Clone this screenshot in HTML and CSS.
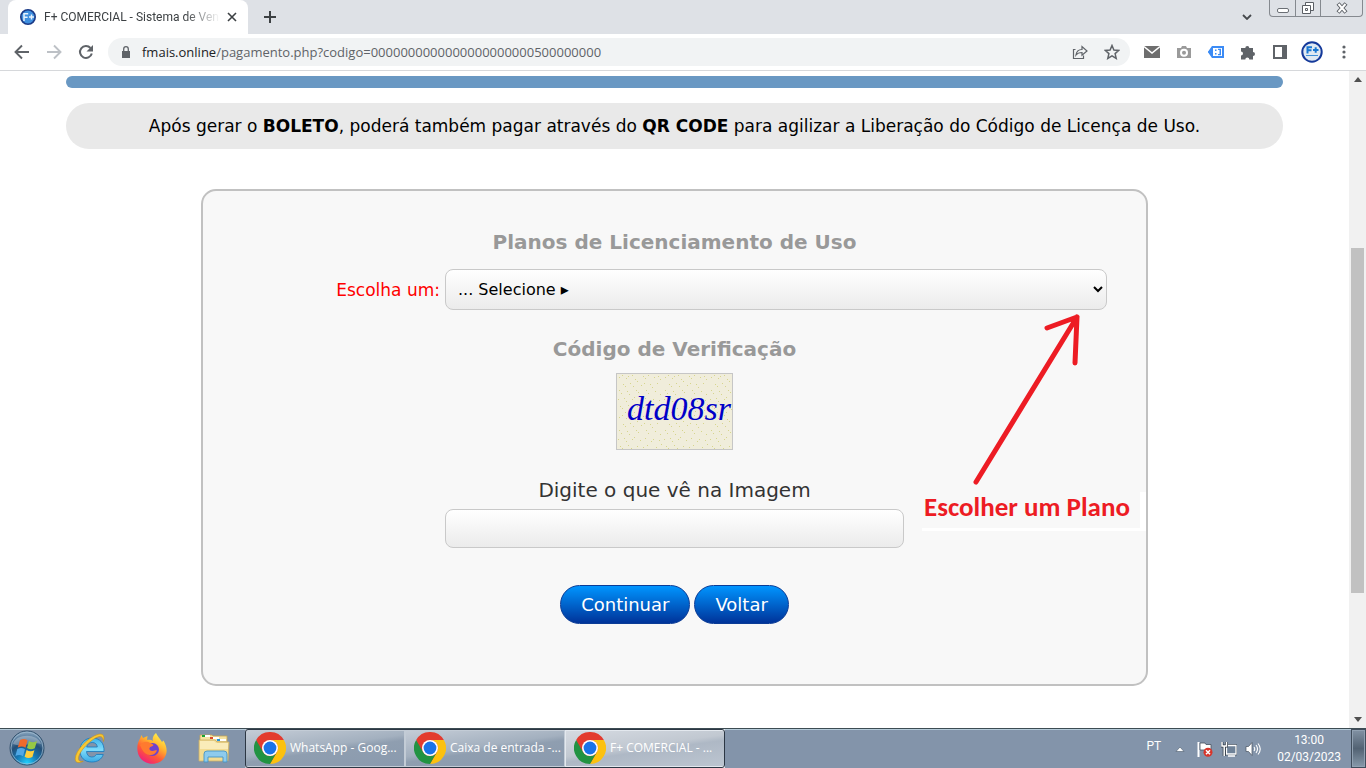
FILE: index.html
```
<!DOCTYPE html>
<html lang="pt">
<head>
    <meta charset="UTF-8">
    <meta name="viewport" content="width=device-width, initial-scale=1.0">
    <title>F+ COMERCIAL - Sistema de Vendas</title>
    <link rel="stylesheet" href="styles.css">
</head>
<body>
    <!-- Icons used more than once -->
    <svg class="defs" aria-hidden="true">
        <symbol id="chrome" viewBox="-16 -16 32 32">
            <circle r="15" fill="#e33b2e"/>
            <path d="M0-8H13.86A16 16 0 0 0-13.86-8L-6.93 4A8 8 0 0 1 0-8Z" fill="#e33b2e"/>
            <path d="M0-8H13.86A16 16 0 0 1 0 16L6.93 4A8 8 0 0 0 0-8Z" fill="#fcc10f"/>
            <path d="M6.93 4L0 16A16 16 0 0 1-13.86-8L-6.93 4A8 8 0 0 0 6.93 4Z" fill="#229342"/>
            <circle r="8" fill="#fff"/>
            <circle r="6.4" fill="#1a73e8"/>
        </symbol>
    </svg>

    <header class="tabs">
        <div class="tab">
            <svg class="favicon" viewBox="0 0 16 16">
                <circle cx="8" cy="8" r="7.2" fill="#3f8fdf" stroke="#1b3a86" stroke-width="1.6"/>
                <path d="M4 12V4.800h4.200M4 8.200h3.600M9 8h5M11.500 5.500v5" fill="none" stroke="#e8f3fd" stroke-width="1.5"/>
            </svg>
            <span class="tab-title">F+ COMERCIAL - Sistema de Ven</span>
            <button class="tab-close" aria-label="Fechar guia">
                <svg viewBox="0 0 10 10"><path d="M1 1l8 8M9 1l-8 8" stroke="#3c4043" stroke-width="1.6"/></svg>
            </button>
        </div>
        <button class="new-tab" aria-label="Nova guia">
            <svg viewBox="0 0 12 12"><path d="M6 0v12M0 6h12" stroke="#3c4043" stroke-width="2"/></svg>
        </button>
        <button class="tab-search" aria-label="Pesquisar guias">
            <svg viewBox="0 0 10 6"><path d="M1 1l4 4 4-4" fill="none" stroke="#45484c" stroke-width="1.8"/></svg>
        </button>
        <div class="window-buttons">
            <button class="min" aria-label="Minimizar">
                <svg viewBox="0 0 24 16"><rect x="6.500" y="8.500" width="11" height="4" rx="1.500" fill="#fff" stroke="#6b6f75"/></svg>
            </button>
            <button class="max" aria-label="Restaurar">
                <svg viewBox="0 0 24 16">
                    <path d="M9.500 2.500h8v8h-8z" fill="#fff" stroke="#5b5f65"/>
                    <path d="M6.500 5.500h8v8h-8zM9.500 8.500h2v2h-2z" fill="#fff" stroke="#5b5f65"/>
                </svg>
            </button>
            <button class="quit" aria-label="Fechar">
                <svg viewBox="0 0 24 16"><path d="M8 3.500l8 9M16 3.500l-8 9" stroke="#5b5f65" stroke-width="4"/><path d="M8.500 4l7 8M15.500 4l-7 8" stroke="#fff" stroke-width="2"/></svg>
            </button>
        </div>
    </header>

    <nav class="toolbar">
        <button class="tool" aria-label="Voltar">
            <svg viewBox="0 0 16 16"><path d="M15 8H2M8 1.500L1.500 8 8 14.500" fill="none" stroke="#5f6368" stroke-width="1.9"/></svg>
        </button>
        <button class="tool" aria-label="Avançar">
            <svg viewBox="0 0 16 16"><path d="M1 8h13M8 1.500L14.500 8 8 14.500" fill="none" stroke="#bdc1c6" stroke-width="1.9"/></svg>
        </button>
        <button class="tool" aria-label="Recarregar">
            <svg viewBox="0 0 16 16"><path d="M13.800 9.500A6 6 0 1 1 12.500 4" fill="none" stroke="#5f6368" stroke-width="2"/><path d="M15 1v6.500H8.500z" fill="#5f6368"/></svg>
        </button>
        <div class="omnibox">
            <svg class="lock" viewBox="0 0 10 12"><path d="M1 5h8v7H1z" fill="#5f6368"/><path d="M2.700 5V3a2.300 2.300 0 0 1 4.600 0v2" fill="none" stroke="#5f6368" stroke-width="1.300"/></svg>
            <span class="url"><b>fmais.online</b>/pagamento.php?codigo=0000000000000000000000500000000</span>
            <button class="tool" aria-label="Compartilhar">
                <svg viewBox="0 0 16 16"><path d="M3.500 5.500H1.500v9h10v-3" fill="none" stroke="#5f6368" stroke-width="1.200"/><path d="M4 11c.5-4 3-5.500 6-5.500V2.500l5 4.500-5 4.300V8.500C7.500 8.500 5.500 9 4 11z" fill="none" stroke="#5f6368" stroke-width="1.200"/></svg>
            </button>
            <button class="tool" aria-label="Favoritar">
                <svg viewBox="0 0 16 16"><path d="M8 1.500l1.900 4.500 4.900.4-3.700 3.200 1.100 4.800L8 11.800l-4.200 2.600 1.100-4.800L1.200 6.400 6.100 6z" fill="none" stroke="#5f6368" stroke-width="1.500"/></svg>
            </button>
        </div>
        <div class="extensions">
            <button class="tool" aria-label="E-mail">
                <svg viewBox="0 0 16 16"><path d="M0 2h16v12H0z" fill="#6e6e6e"/><path d="M0 2.500l8 6.500 8-6.500" fill="none" stroke="#fff" stroke-width="1.500"/></svg>
            </button>
            <button class="tool" aria-label="Captura">
                <svg viewBox="0 0 16 16"><path d="M1 4h4l1-2h4l1 2h4v10H1z" fill="#9a9a9a"/><circle cx="8" cy="8.800" r="3" fill="none" stroke="#fff" stroke-width="2"/></svg>
            </button>
            <button class="tool" aria-label="Etiqueta">
                <svg viewBox="0 0 16 16"><path d="M4.500 3h10.500v10H4.500L1 8z" fill="#fff" stroke="#3b8bf5" stroke-width="2"/><path d="M0 8l5-5v10z" fill="#3b8bf5"/><path d="M7 5.500h1.500v1.500H7zM7 9h1.500v1.500H7zM10 4.700h3v6.600h-3V10h1.500V6H10z" fill="#3b8bf5"/></svg>
            </button>
            <button class="tool" aria-label="Extensões">
                <svg viewBox="0 0 16 16"><path d="M1 4h4.300a2 2 0 1 1 4 0H13v4a2 2 0 1 1 0 4v3.500H9.300a2 2 0 0 0-4 0H1v-4a2 2 0 0 0 0-4z" fill="#5f6368"/></svg>
            </button>
            <button class="tool" aria-label="Painel lateral">
                <svg viewBox="0 0 16 16"><path d="M2 2h12v12H2z" fill="#fff" stroke="#5f6368" stroke-width="2"/><path d="M10 2h4v12h-4z" fill="#5f6368"/></svg>
            </button>
            <button class="tool profile" aria-label="Perfil">
                <svg viewBox="0 0 22 22"><circle cx="11" cy="11" r="9.700" fill="#dfe9f2" stroke="#14399a" stroke-width="2"/><path d="M6.500 12.500V6.200H11M6.500 9.300h4M12 9h5.500M14.700 6.300v5.500" fill="none" stroke="#1877d2" stroke-width="2"/><path d="M5 14.500h12" stroke="#3f8fd8"/></svg>
            </button>
            <button class="tool" aria-label="Menu">
                <svg viewBox="0 0 16 16"><g fill="#5f6368"><circle cx="8" cy="3" r="1.600"/><circle cx="8" cy="8" r="1.600"/><circle cx="8" cy="13" r="1.600"/></g></svg>
            </button>
        </div>
    </nav>

    <div class="view">
        <main class="page">
            <div class="bar"></div>
            <p class="notice">Após gerar o <b>BOLETO</b>, poderá também pagar através do <b>QR CODE</b> para agilizar a Liberação do Código de Licença de Uso.</p>

            <form class="card">
                <h2>Planos de Licenciamento de Uso</h2>
                <div class="plan-row">
                    <label for="plano">Escolha um:</label>
                    <select id="plano">
                        <option>... Selecione ▸</option>
                    </select>
                </div>
                <h2>Código de Verificação</h2>
                <svg class="captcha" viewBox="0 0 115 75">
                    <defs>
                        <pattern id="grain" width="46" height="40" patternUnits="userSpaceOnUse">
                            <path transform="translate(0 .5)" d="M2 3h1M5 1h1M9 4h1M11 2h1M15 1h1M18 5h1M20 7h1M26 2h1M28 4h1M31 1h1M37 3h1M41 2h1M43 5h1M6 10h1M8 12h1M13 9h1M16 12h1M24 11h1M27 9h1M33 10h1M35 13h1M40 9h1M2 16h1M4 19h1M10 17h1M12 20h1M19 16h1M21 18h1M29 16h1M31 19h1M38 17h1M43 20h1M1 25h1M7 24h1M9 27h1M15 25h1M17 23h1M23 26h1M28 24h1M34 27h1M36 25h1M42 26h1M3 32h1M5 34h1M11 31h1M14 34h1M20 32h1M22 35h1M26 33h1M30 31h1M32 37h1M39 33h1M41 36h1M8 38h1M17 38h1M44 30h1" stroke="#d6d58d"/>
                        </pattern>
                    </defs>
                    <rect width="115" height="75" fill="#f0eddb"/>
                    <rect width="115" height="75" fill="url(#grain)"/>
                    <text x="10" y="46">dtd08sr</text>
                </svg>
                <label class="code-label" for="codigo">Digite o que vê na Imagem</label>
                <input class="code" id="codigo" type="text">
                <div class="actions">
                    <button type="button">Continuar</button>
                    <button type="button">Voltar</button>
                </div>

                <!-- Hint drawn over the form -->
                <svg class="arrow" viewBox="0 0 110 175">
                    <path d="M6 170L107 5M77 16l30-11-2 46" fill="none" stroke="#ed1c24" stroke-width="5" stroke-linecap="round" stroke-linejoin="round"/>
                </svg>
                <div class="hint">Escolher um Plano</div>
            </form>
        </main>
        <div class="scrollbar">
            <svg viewBox="0 0 17 17"><path d="M5 11h8L9 6z" fill="#505050"/></svg>
            <div class="track">
                <div class="thumb"></div>
            </div>
            <svg viewBox="0 0 17 17"><path d="M5 6h8l-4 5z" fill="#505050"/></svg>
        </div>
    </div>

    <footer class="taskbar">
        <button class="launch start" aria-label="Iniciar">
            <svg viewBox="0 0 36 36">
                <defs>
                    <radialGradient id="orb" cx=".5" cy=".95" r=".9"><stop offset="0" stop-color="#22d3ff"/><stop offset=".35" stop-color="#1679b5"/><stop offset=".65" stop-color="#234f78"/><stop offset="1" stop-color="#7f9db8"/></radialGradient>
                </defs>
                <circle cx="18" cy="18" r="17" fill="url(#orb)" stroke="#33516d"/>
                <circle cx="18" cy="18" r="16" fill="none" stroke="#a5c0d4" stroke-opacity=".7"/>
                <path d="M4 14C7 3 29 3 32 14 25 11 14 18 4 14z" fill="#fff" opacity=".3"/>
                <path d="M11 10c3-1.500 5-1.500 7.500.3l-2 7.400c-2.500-1.700-5-1.700-7.700-.2z" fill="#ef6a2c"/>
                <path d="M20 11c3 1.700 5 1.500 8 0l-2.200 7.300c-2.800 1.500-5 1.400-7.800-.2z" fill="#96c845"/>
                <path d="M8.300 19c2.800-1.500 5.200-1.400 7.700.2l-2 7c-2.500-1.600-5-1.600-7.600-.2z" fill="#50a8e6"/>
                <path d="M17.600 20c2.700 1.600 5 1.600 7.800.2l-2 6.800c-2.800 1.500-5.200 1.500-7.800-.2z" fill="#fdcf3d"/>
            </svg>
        </button>
        <button class="launch" aria-label="Internet Explorer">
            <svg viewBox="0 0 32 32">
                <defs>
                    <linearGradient id="ie" x1="0" y1="0" x2="0" y2="1"><stop offset="0" stop-color="#3fb2ea"/><stop offset=".5" stop-color="#7fdcfb"/><stop offset="1" stop-color="#3aa9e4"/></linearGradient>
                </defs>
                <path d="M30 19.500H12.500c.3 3.500 2.300 5.500 5.200 5.500 2.200 0 3.700-.8 4.600-2.500h7C27.500 27.500 23.500 30 17.800 30 10.500 30 6 25.500 6 18.500S10.800 6 18 6c7.800 0 12.500 5 12 13.500zM12.700 15h10.600c-.2-2.900-2.200-4.500-5.100-4.500s-5 1.700-5.500 4.500z" fill="url(#ie)" stroke="#1878bd" stroke-width=".8"/>
                <path d="M29.500 9.500C31 4 29 1.200 24.500 2.300 14.500 4.700 1.200 18.500 1.200 27c0 4.200 4 4.300 8 2.300-3 .5-4.700-.3-4.700-2.800C4.500 19.500 17 7 24.500 4.700c3-.8 4.500.6 5 4.800z" fill="#f8c832" stroke="#c98f16" stroke-width=".6"/>
            </svg>
        </button>
        <button class="launch" aria-label="Firefox">
            <svg viewBox="0 0 32 32">
                <defs>
                    <linearGradient id="fox" x1=".85" y1=".1" x2=".3" y2="1"><stop offset="0" stop-color="#fff04a"/><stop offset=".35" stop-color="#ffb02e"/><stop offset=".65" stop-color="#ff5a36"/><stop offset="1" stop-color="#f01e7d"/></linearGradient>
                </defs>
                <path d="M20 1c2 4 4.500 6 6 9l1.500-1.500C32 16 31.500 23 27 27.500c-6 6-16.500 5.500-22-.5C0 21 .5 12 4 6.500L5.500 3 7 6l4.500-2-.5 4c2.500-.5 4.500 0 6 1-1-3 .5-6 3-8z" fill="url(#fox)"/>
                <circle cx="16.500" cy="17.500" r="6.500" fill="#6d42cf"/>
                <path d="M4 13c3-3.500 7-4 10-2 1.500 1 3 1 3.500 2-.5 1.500-3.500 1.500-4 3-.5 1.300.5 3 3 3 2 0 3-1 4.500-.5-1 3-4 5-7.500 4.500C8 22 6 18 4 13z" fill="#ff7a2f"/>
            </svg>
        </button>
        <button class="launch" aria-label="Explorador de Arquivos">
            <svg viewBox="0 0 32 32">
                <path d="M2 3h12l1 1h14v6H2z" fill="#f6e3a1" stroke="#c5a556" stroke-width=".8"/>
                <path d="M4 3h8v2H4z" fill="#fff"/><path d="M4 3h3v2H4z" fill="#19a332"/>
                <path d="M12 5h9v2h-9z" fill="#fff"/><path d="M12 5h3v2h-3z" fill="#d94b2b"/>
                <path d="M19 7h9v2h-9z" fill="#fff"/><path d="M19 7h3v2h-3z" fill="#2493dd"/>
                <path d="M1 8h16l2 2h12l-1 19H1z" fill="#f3dc92" stroke="#cbb067" stroke-width=".8"/>
                <path d="M2 9h14l2 2h12v6H2z" fill="#faecb9"/>
                <path d="M6 30V22q0-3 3-3h17q3 0 3 3v8h-4v-5H10v5z" fill="#8ecbed" stroke="#4694c5" stroke-width=".9"/>
            </svg>
        </button>
        <div class="tasks">
            <button class="task"><svg viewBox="0 0 32 32"><use href="#chrome"/></svg><span>WhatsApp - Goog...</span></button>
            <button class="task"><svg viewBox="0 0 32 32"><use href="#chrome"/></svg><span>Caixa de entrada -...</span></button>
            <button class="task active"><svg viewBox="0 0 32 32"><use href="#chrome"/></svg><span>F+ COMERCIAL - ...</span></button>
        </div>
        <div class="tray">
            <span class="lang">PT</span>
            <svg class="up" viewBox="0 0 10 6"><path d="M1 5.500L5 1l4 4.500z" fill="#fff" stroke="#4c5a6b" stroke-width=".6"/></svg>
            <svg viewBox="0 0 16 16"><path d="M1.500 1v15" stroke="#fff" stroke-width="2"/><path d="M3 2h5l1 1.500h5V10H9L8 9H3z" fill="#fff" stroke="#46505e" stroke-width=".8"/><circle cx="11" cy="11.300" r="4.500" fill="#d7352b"/><path d="M9 9.300l4 4M13 9.300l-4 4" stroke="#fff" stroke-width="1.500"/></svg>
            <svg viewBox="0 0 16 16"><path d="M5.500 4.500h9.500V13H5.500z" fill="#6f8298" stroke="#333d48" stroke-width="2.600"/><path d="M5.500 4.500h9.500V13H5.500z" fill="#6f8298" stroke="#fff" stroke-width="1.300"/><path d="M7 15h7" stroke="#fff" stroke-width="1.500"/><path d="M1 1v4h4.500V1M3.200 5v10" fill="none" stroke="#333d48" stroke-width="3"/><path d="M1 1v4h4.500V1M3.200 5v10" fill="none" stroke="#fff" stroke-width="1.500"/></svg>
            <svg viewBox="0 0 16 16"><path d="M1 5.500h2.500L7 1.500v13L3.500 10.500H1z" fill="#fff" stroke="#46505e" stroke-width=".7"/><path d="M9 6q1.500 2 0 4M11 4q3 4 0 8M13 2.500q4.500 5.500 0 11" fill="none" stroke="#fff" stroke-width="1.100"/></svg>
            <div class="clock"><time>13:00</time><span>02/03/2023</span></div>
            <button class="show-desktop" aria-label="Mostrar área de trabalho"></button>
        </div>
    </footer>
</body>
</html>
```
FILE: styles.css
```
* {
  box-sizing: border-box;
}

body {
  margin: 0;
  height: 100vh;
  display: flex;
  flex-direction: column;
  overflow: hidden;
  background-color: #fff;
  color: #000;
  font-family: Verdana, "DejaVu Sans", sans-serif;
  font-size: 17px;
}

button {
  margin: 0;
  padding: 0;
  border: 0;
  background: none;
  font-family: inherit;
  cursor: pointer;
}

svg {
  display: block;
  flex: none;
}

.defs {
  display: none;
}

/* Tab Strip */
.tabs {
  flex: none;
  display: flex;
  align-items: center;
  height: 34px;
  padding: 0 3px 0 8px;
  background-color: #dee1e6;
  font-family: "Segoe UI", Roboto, sans-serif;
}

.tab {
  display: flex;
  align-items: center;
  width: 240px;
  height: 34px;
  padding: 0 8px 0 12px;
  border-radius: 8px 8px 0 0;
  background-color: #fff;
}

.favicon {
  width: 16px;
  height: 16px;
}

.tab-title {
  flex: 1;
  margin: 0 4px 0 8px;
  white-space: nowrap;
  color: #3c4043;
  font-size: 12px;
  mask-image: linear-gradient(to right, #000 80%, transparent);
}

.tab-close {
  padding: 3px;
}

.tab-close svg {
  width: 10px;
  height: 10px;
}

.new-tab {
  margin-left: 16px;
}

.new-tab svg {
  width: 12px;
  height: 12px;
}

.tab-search {
  margin-left: auto;
  margin-right: 17px;
}

.tab-search svg {
  width: 10px;
  height: 6px;
}

.window-buttons {
  display: flex;
  align-self: flex-start;
  border: 1px solid #85898f;
  border-top: 0;
  border-radius: 0 0 4px 4px;
}

.window-buttons button {
  display: flex;
  justify-content: center;
  width: 25px;
  height: 16px;
}

.window-buttons button + button {
  border-left: 1px solid #85898f;
}

.window-buttons .quit {
  width: 42px;
}

.window-buttons svg {
  width: 24px;
  height: 16px;
}

/* Toolbar */
.toolbar {
  flex: none;
  display: flex;
  align-items: center;
  height: 37px;
  padding: 0 6px;
  border-bottom: 1px solid #d6d8db;
  background-color: #fff;
}

.tool {
  display: flex;
  justify-content: center;
  align-items: center;
  width: 32px;
  height: 28px;
}

.tool svg {
  width: 16px;
  height: 16px;
}

.profile svg {
  width: 22px;
  height: 22px;
}

.omnibox {
  flex: 1;
  display: flex;
  align-items: center;
  height: 28px;
  margin: 0 6px;
  padding: 0 2px 0 13px;
  border-radius: 14px;
  background-color: #f1f3f4;
}

.lock {
  width: 10px;
  height: 12px;
}

.url {
  flex: 1;
  margin-left: 11px;
  color: #5f6368;
  font-family: "Segoe UI", "Open Sans", sans-serif;
  font-size: 13px;
}

.url b {
  color: #202124;
  font-weight: normal;
}

.extensions {
  display: flex;
}

/* Page */
.view {
  flex: 1;
  display: flex;
  min-height: 0;
}

.page {
  flex: 1;
  padding: 5px 66px 0;
  overflow: hidden;
}

.bar {
  height: 12px;
  border-radius: 6px;
  background-color: #6998c3;
}

.notice {
  margin: 15px 0 40px;
  padding: 12px;
  border-radius: 23px;
  background-color: #e9e9e9;
  text-align: center;
  line-height: 22px;
}

.card {
  position: relative;
  display: flex;
  flex-direction: column;
  align-items: center;
  margin: 0 135px;
  padding: 38px 39px 60px;
  border: 2px solid #c1c1c1;
  border-radius: 15px;
  background-color: #f8f8f8;
}

.card h2 {
  margin: 0;
  color: #999;
  font-size: 20px;
  line-height: 26px;
}

.plan-row {
  align-self: stretch;
  display: flex;
  justify-content: flex-end;
  align-items: center;
  gap: 5px;
  margin: 14px 0 26px;
  color: #f00;
}

.plan-row select {
  width: 662px;
  height: 41px;
  padding: 0 4px 0 8px;
  color: #000;
}

.plan-row select,
.code {
  border: 1px solid #c9c9c9;
  border-radius: 8px;
  background: linear-gradient(#fff, #ebebeb);
  font-family: inherit;
  font-size: 16px;
}

.captcha {
  width: 117px;
  height: 77px;
  margin: 11px 0 27px;
  border: 1px solid #c6c6c6;
}

.captcha text {
  fill: #0000c8;
  font-family: "Monotype Corsiva", "Liberation Serif", serif;
  font-size: 34px;
  font-style: italic;
}

.code-label {
  color: #333;
  font-size: 20px;
  line-height: 26px;
}

.code {
  width: 459px;
  height: 39px;
  margin: 6px 0 37px;
  padding: 0 12px;
}

.actions {
  display: flex;
  gap: 4px;
}

.actions button {
  height: 39px;
  padding: 0 20px;
  border: 1px solid #0b3c96;
  border-radius: 20px;
  background: linear-gradient(#0095ff, #003399);
  color: #fff;
  font-size: 18px;
}

/* Hint Over The Form */
.arrow {
  position: absolute;
  top: 121px;
  right: 66px;
  width: 110px;
  height: 175px;
}

.hint {
  position: absolute;
  top: 301px;
  right: 0;
  width: 224px;
  height: 39px;
  padding-left: 2px;
  border-right: 6px solid #fff;
  border-bottom: 3px solid #fff;
  color: #ed1c24;
  font-family: Calibri, Lato, sans-serif;
  font-size: 27px;
  font-weight: bold;
  line-height: 30px;
  white-space: nowrap;
}

/* Scrollbar */
.scrollbar {
  flex: none;
  display: flex;
  flex-direction: column;
  width: 17px;
  background-color: #f1f1f1;
}

.scrollbar svg {
  width: 17px;
  height: 17px;
}

.track {
  flex: 1;
  display: grid;
  grid-template-rows: 160fr 345fr 118fr;
  padding: 0 2px;
}

.thumb {
  grid-row: 2;
  background-color: #c1c1c1;
}

/* Taskbar */
.taskbar {
  flex: none;
  display: flex;
  align-items: stretch;
  height: 40px;
  border-top: 1px solid #3d4c53;
  background-color: #8394aa;
  box-shadow: inset 0 1px #b5cbd9;
  color: #fff;
  font-family: "Segoe UI", "Open Sans", sans-serif;
  font-size: 12px;
}

.launch {
  display: flex;
  justify-content: center;
  align-items: center;
  width: 62px;
  padding-bottom: 2px;
}

.launch svg {
  width: 32px;
  height: 32px;
}

.start {
  width: 59px;
  padding-right: 5px;
}

.start svg {
  width: 36px;
  height: 36px;
}

.tasks {
  display: flex;
  border-radius: 3px;
  outline: 1px solid #2c3744;
  outline-offset: -1px;
}

.task {
  display: flex;
  align-items: center;
  gap: 4px;
  width: 160px;
  padding: 0 0 2px 8px;
  border: 2px solid #c3ccd6;
  border-width: 2px 1px;
  background: linear-gradient(172deg, #c4ccd6 0%, #a3b0bf 45%, #8f9eb0 55%, #8a9aae 100%);
  color: #fff;
  font-size: 12px;
  white-space: nowrap;
}

.task svg {
  width: 32px;
  height: 32px;
}

.active {
  border-color: #e3e8ee;
  background: linear-gradient(172deg, #d5dae1 0%, #c1c8d1 45%, #aeb8c5 55%, #bcc5d0 100%);
}

.tray {
  display: flex;
  align-items: center;
  gap: 8px;
  margin-left: auto;
  font-family: "Segoe UI", Roboto, sans-serif;
}

.tray svg {
  width: 16px;
  height: 16px;
}

.tray .up {
  width: 10px;
  height: 6px;
  margin: 0 4px 0 6px;
}

.lang {
  padding-bottom: 6px;
}

.clock {
  display: flex;
  flex-direction: column;
  align-items: center;
  margin: 0 2px 0 8px;
  line-height: 17px;
}

.show-desktop {
  align-self: stretch;
  width: 15px;
  border: 1px solid #404d5c;
  background: linear-gradient(#8292a4, #526273 50%, #8799aa);
  box-shadow: inset 0 0 0 1px #91a1b2;
}
```
